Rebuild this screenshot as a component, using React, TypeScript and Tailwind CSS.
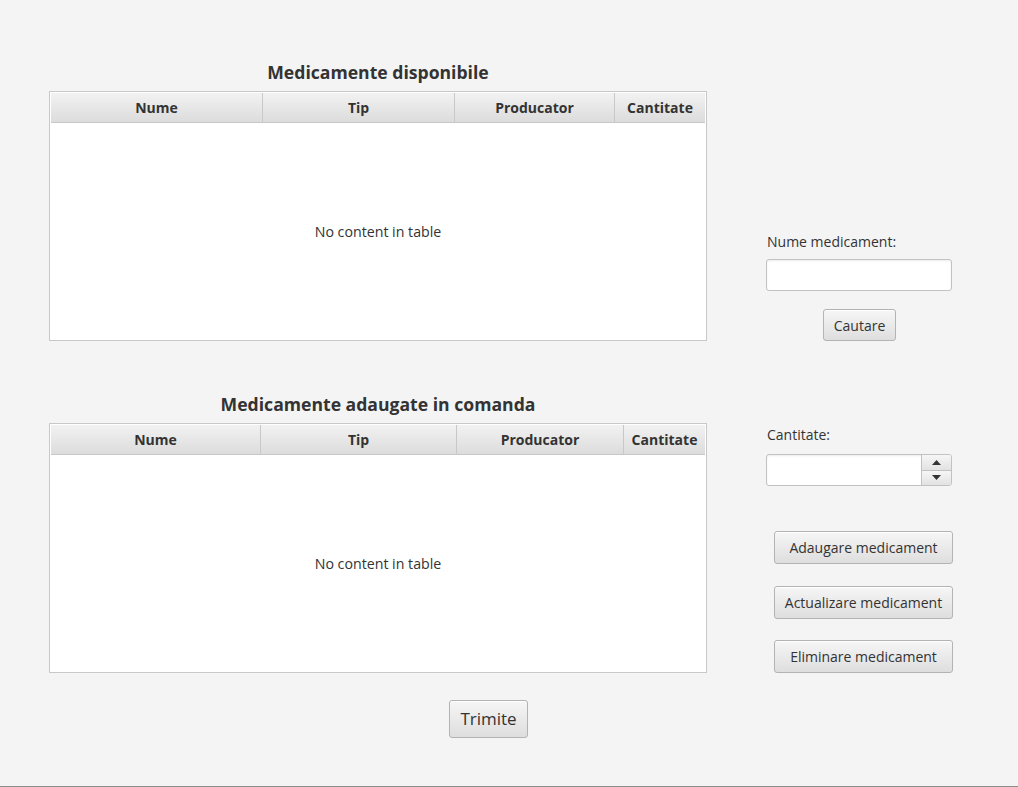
import React from "react";

const font = { fontFamily: "'Open Sans', 'Noto Sans', sans-serif" };

interface Col {
  label: string;
  width: number;
}

const topCols: Col[] = [
  { label: "Nume", width: 212 },
  { label: "Tip", width: 192 },
  { label: "Producator", width: 160 },
  { label: "Cantitate", width: 90 },
];

const bottomCols: Col[] = [
  { label: "Nume", width: 210 },
  { label: "Tip", width: 196 },
  { label: "Producator", width: 167 },
  { label: "Cantitate", width: 81 },
];

const Table = ({ cols }: { cols: Col[] }) => (
  <div className="w-[658px] h-[250px] border border-[#c8c8c8] bg-white p-px flex flex-col">
    <div className="flex h-[30px] bg-gradient-to-b from-[#f2f2f2] to-[#dcdcdc] border-b border-[#c8c8c8]">
      {cols.map((c, i) => (
        <div
          key={i}
          className="flex items-center justify-center text-[14px] font-bold text-[#333333] border-r border-[#c8c8c8] last:border-r-0"
          style={{ width: c.width }}
        >
          {c.label}
        </div>
      ))}
    </div>
    <div className="flex-1 flex items-center justify-center pt-[2px] text-[14.2px] text-[#333333]">
      No content in table
    </div>
  </div>
);

const Button = ({
  label,
  className,
}: {
  label: string;
  className: string;
}) => (
  <button
    className={`flex items-center justify-center rounded-[3px] border border-[#b3b3b3] bg-gradient-to-b from-[#f6f6f6] to-[#dedede] text-[#333333] shadow-[inset_0_1px_0_#ffffff] ${className}`}
  >
    {label}
  </button>
);

const TextField = ({ children }: { children?: React.ReactNode }) => (
  <div className="h-[32px] w-[186px] rounded-[3px] border border-[#c2c2c2] bg-white shadow-[inset_0_1px_2px_rgba(0,0,0,0.08)] flex justify-end overflow-hidden">
    {children}
  </div>
);

export default function App() {
  return (
    <div
      className="w-[1018px] h-[787px] bg-[#f4f4f4] border-b border-[#8c8c8c] flex"
      style={font}
    >
      <div className="ml-[49px] w-[658px] flex flex-col">
        <div className="mt-[59px] h-[26px] flex items-center justify-center text-[17.6px] font-bold text-[#333333]">
          Medicamente disponibile
        </div>
        <div className="mt-[6px]">
          <Table cols={topCols} />
        </div>
        <div className="mt-[50px] h-[26px] flex items-center justify-center text-[17.6px] font-bold text-[#333333]">
          Medicamente adaugate in comanda
        </div>
        <div className="mt-[6px]">
          <Table cols={bottomCols} />
        </div>
        <div className="mt-[27px] flex">
          <Button label="Trimite" className="ml-[400px] w-[79px] h-[38px] text-[17px]" />
        </div>
      </div>

      <div className="ml-[59px] w-[187px] flex flex-col text-[14px] text-[#333333]">
        <div className="mt-[232px] h-[20px] leading-[20px] pl-px">Nume medicament:</div>
        <div className="mt-[7px]">
          <TextField />
        </div>
        <div className="mt-[18px] flex justify-center">
          <Button label="Cautare" className="w-[73px] h-[32px] text-[14px]" />
        </div>
        <div className="mt-[84px] h-[20px] leading-[20px] pl-px">Cantitate:</div>
        <div className="mt-[9px]">
          <TextField>
            <div className="w-[30px] h-full flex flex-col border-l border-[#c2c2c2]">
              <div className="flex-1 flex items-center justify-center bg-gradient-to-b from-[#f6f6f6] to-[#e2e2e2] border-b border-[#c2c2c2]">
                <svg width="9" height="5" viewBox="0 0 9 5">
                  <path d="M0 5 L4.5 0 L9 5 Z" fill="#333333" />
                </svg>
              </div>
              <div className="flex-1 flex items-center justify-center bg-gradient-to-b from-[#f6f6f6] to-[#e2e2e2]">
                <svg width="9" height="5" viewBox="0 0 9 5">
                  <path d="M0 0 L9 0 L4.5 5 Z" fill="#333333" />
                </svg>
              </div>
            </div>
          </TextField>
        </div>
        <div className="ml-[8px] mt-[45px] flex flex-col">
          <Button label="Adaugare medicament" className="w-[179px] h-[33px] text-[14px]" />
          <Button label="Actualizare medicament" className="mt-[22px] w-[179px] h-[33px] text-[14px]" />
          <Button label="Eliminare medicament" className="mt-[21px] w-[179px] h-[33px] text-[14px]" />
        </div>
      </div>
    </div>
  );
}
